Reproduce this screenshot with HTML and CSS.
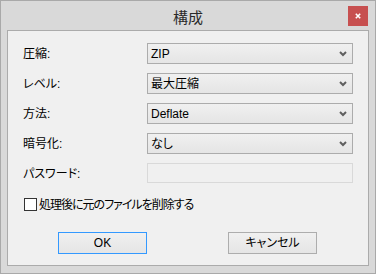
FILE: index.html
```html
<!DOCTYPE html>
<html lang="ja">
<head>
<meta charset="utf-8">
<title>構成</title>
<link rel="stylesheet" href="styles.css">
</head>
<body>
<div class="window">
  <div class="titlebar">
    <span class="title">構成</span>
    <div class="close">
      <svg width="6" height="6" viewBox="0 0 6 6"><path d="M0.8 0.8 L5.2 5.2 M5.2 0.8 L0.8 5.2" stroke="#fff" stroke-width="1.6" fill="none"/></svg>
    </div>
  </div>
  <div class="client">
    <div class="form">
      <div class="label">圧縮:</div>
      <div class="combo"><span>ZIP</span><svg class="chev" width="8" height="6" viewBox="0 0 8 6"><path d="M1 1 L4 4 L7 1" stroke="#5f5f5f" stroke-width="2" fill="none"/></svg></div>
      <div class="label">レベル:</div>
      <div class="combo"><span>最大圧縮</span><svg class="chev" width="8" height="6" viewBox="0 0 8 6"><path d="M1 1 L4 4 L7 1" stroke="#5f5f5f" stroke-width="2" fill="none"/></svg></div>
      <div class="label">方法:</div>
      <div class="combo"><span>Deflate</span><svg class="chev" width="8" height="6" viewBox="0 0 8 6"><path d="M1 1 L4 4 L7 1" stroke="#5f5f5f" stroke-width="2" fill="none"/></svg></div>
      <div class="label">暗号化:</div>
      <div class="combo"><span>なし</span><svg class="chev" width="8" height="6" viewBox="0 0 8 6"><path d="M1 1 L4 4 L7 1" stroke="#5f5f5f" stroke-width="2" fill="none"/></svg></div>
      <div class="label">パスワード:</div>
      <div class="field"></div>
    </div>
    <div class="check-row">
      <span class="checkbox"></span>
      <span class="check-label">処理後に元のファイルを削除する</span>
    </div>
    <div class="buttons">
      <div class="btn default">OK</div>
      <div class="btn">キャンセル</div>
    </div>
  </div>
</div>
</body>
</html>
```
FILE: styles.css
```css
html, body {
  margin: 0;
  padding: 0;
  background: #d9d9d9;
}
body {
  font-family: "Liberation Sans", "Noto Sans CJK JP", sans-serif;
  font-size: 12px;
  color: #000;
  font-feature-settings: "palt";
}
.window {
  width: 376px;
  height: 274px;
  box-sizing: border-box;
  border: 1px solid #a9a9a9;
  background: #d9d9d9;
}
.titlebar {
  position: relative;
  height: 29px;
  display: flex;
  align-items: center;
  justify-content: center;
}
.title {
  font-family: "Noto Sans CJK JP", sans-serif;
  font-size: 15px;
  color: #2a2a2a;
  line-height: 1;
  margin-top: 1px;
}
.close {
  position: absolute;
  right: 7px;
  top: 5px;
  width: 20px;
  height: 20px;
  background: #c75050;
  display: flex;
  align-items: center;
  justify-content: center;
}
.close svg { display: block; }
.client {
  margin: 0 6px;
  height: 236px;
  box-sizing: border-box;
  border: 1px solid #ababab;
  background: #f0f0f0;
  padding: 12px 15px 0 15px;
}
.form {
  display: grid;
  grid-template-columns: 124px 206px;
  grid-auto-rows: 21px;
  row-gap: 9px;
}
.label {
  display: flex;
  align-items: center;
  line-height: 1;
}
.combo {
  box-sizing: border-box;
  border: 1px solid #acacac;
  background: linear-gradient(#f0f0f0, #e5e5e5);
  display: flex;
  align-items: center;
  justify-content: space-between;
  padding: 0 5px 0 3px;
  line-height: 1;
}
.combo span { margin-top: 1px; }
.chev { display: block; }
.field {
  box-sizing: border-box;
  height: 20px;
  border: 1px solid #d9d9d9;
  background: #f0f0f0;
}
.check-row {
  display: flex;
  align-items: center;
  height: 13px;
  margin-top: 14px;
  padding-left: 1px;
  gap: 2px;
}
.checkbox {
  width: 13px;
  height: 13px;
  box-sizing: border-box;
  border: 1px solid #333;
  background: #fff;
}
.check-label {
  line-height: 1;
  letter-spacing: -1px;
}
.buttons {
  display: flex;
  justify-content: center;
  gap: 81px;
  margin-top: 21px;
  margin-left: -1px;
}
.btn {
  width: 89px;
  height: 22px;
  box-sizing: border-box;
  border: 1px solid #adadad;
  background: linear-gradient(#f0f0f0, #e5e5e5);
  display: flex;
  align-items: center;
  justify-content: center;
  line-height: 1;
}
.btn.default { border-color: #3399ff; }
```
